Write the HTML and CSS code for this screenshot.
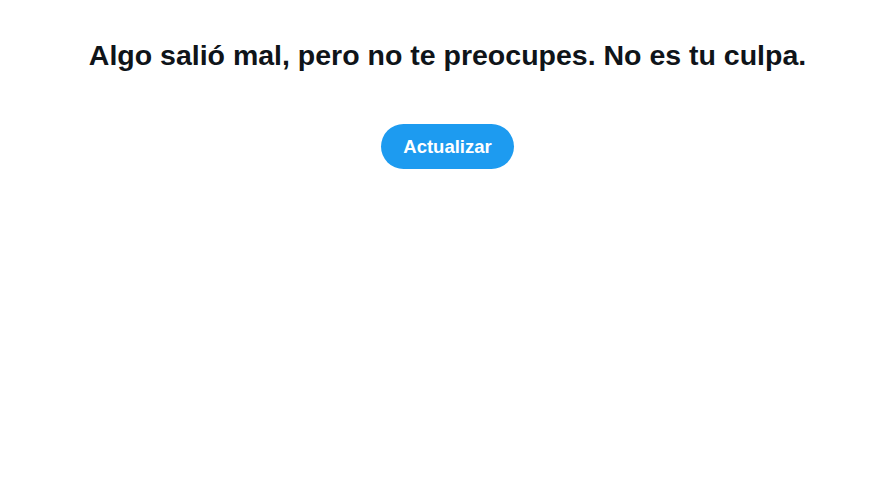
FILE: index.html
```
<!DOCTYPE html>
<html lang="es">
<head>
<meta charset="utf-8">
<link rel="stylesheet" href="styles.css">
</head>
<body>
<main class="error">
  <h1 class="error-title">Algo salió mal, pero no te preocupes. No es tu culpa.</h1>
  <button class="btn">Actualizar</button>
</main>
</body>
</html>
```
FILE: styles.css
```
html, body { margin: 0; padding: 0; background: #fff; }
body { font-family: "Liberation Sans", Arial, sans-serif; color: #0f1419; }
.error { display: flex; flex-direction: column; align-items: center; padding: 37px 0 0 15px; }
.error-title { margin: 0; font-size: 28.5px; line-height: 36px; font-weight: 700; text-align: center; }
.btn { margin-top: 51px; height: 45px; width: 133px; border: none; border-radius: 23px; background: #1d9bf0; color: #fff; font-family: inherit; font-weight: 700; font-size: 18.5px; cursor: pointer; }
```
